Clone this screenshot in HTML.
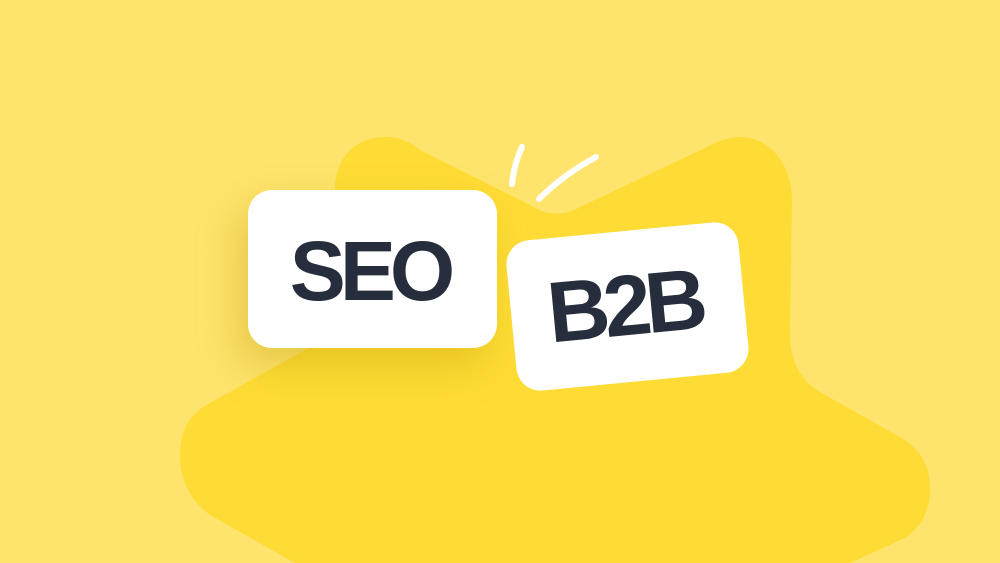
<!DOCTYPE html>
<html><head><style>
html,body{margin:0;padding:0}
body{width:1000px;height:563px;overflow:hidden;background:#FEE46C;position:relative;font-family:"Liberation Sans",Arial,sans-serif}
svg{position:absolute;left:0;top:0}
.card{position:absolute;background:#fff;border-radius:24px;display:flex;align-items:center;justify-content:center;color:#262d3c;font-weight:bold;font-size:84px;letter-spacing:-6px}
.card span{margin-left:-6px}
#seo{left:248px;top:190px;width:249px;height:158px;box-shadow:-10px 18px 40px rgba(190,150,0,0.35)}
#seo span{margin-top:4px}
#b2b{left:511px;top:231px;width:233px;height:151px;transform:rotate(-5.5deg)}
#b2b span{font-size:86px}
</style></head><body>
<svg width="1000" height="563" viewBox="0 0 1000 563">
<path fill="#FEDC35" d="M335,190 C335,155 358,137 385,137 C400,137 410,142 420,150 L530,205 C545,215 562,217 580,207 L705,148 C720,140 730,137 740,137 C770,137 792,165 792,200 L790,335 C790,360 800,380 820,392 L900,437 C925,452 930,470 930,490 C930,512 920,528 905,538 L850,563 L295,563 L210,515 C190,500 180,480 180,455 C180,430 190,413 210,403 L305,350 L335,320 Z"/>
<path d="M522,147 C516,160 513,172 512,184" stroke="#fff" stroke-width="6" stroke-linecap="round" fill="none"/>
<path d="M596,157 C572,170 553,185 539,199" stroke="#fff" stroke-width="6" stroke-linecap="round" fill="none"/>
</svg>
<div class="card" id="seo"><span>SEO</span></div>
<div class="card" id="b2b"><span>B2B</span></div>
</body></html>
